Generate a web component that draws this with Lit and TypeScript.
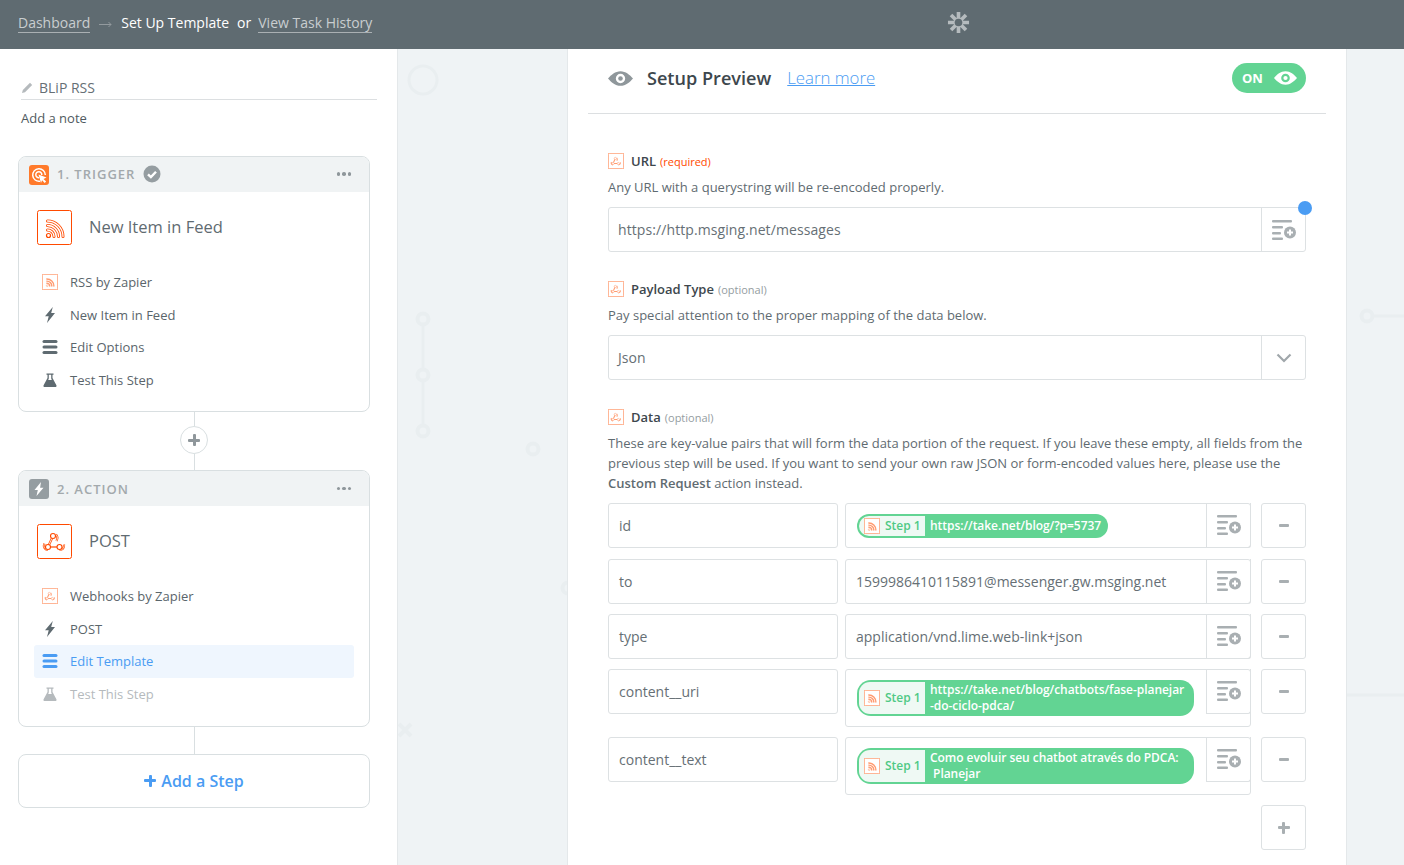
import { LitElement, css, html, svg } from 'lit';
import { customElement } from 'lit/decorators.js';

const RSS_ARCS = svg`
  <path d="M10.500 20a6.500 6.500 0 0 1 6.500 6.500"></path>
  <path d="M10.500 15.500a11 11 0 0 1 11 11"></path>
  <path d="M10.500 11a15.500 15.500 0 0 1 15.500 15.500"></path>
`;

const rssIcon = (cls: string) => html`
  <svg class=${cls} viewBox="0 0 35 35">
    <rect x="0.5" y="0.5" width="34" height="34" rx="2" fill="#fff" stroke="currentColor" vector-effect="non-scaling-stroke"></rect>
    <g fill="none" stroke="currentColor" stroke-width="3" stroke-linecap="round">${RSS_ARCS}</g>
    <g class="inner" fill="none" stroke="#fff" stroke-width="1.300" stroke-linecap="round">${RSS_ARCS}</g>
    <circle cx="11.500" cy="25.500" r="2" fill="#fff" stroke="currentColor" stroke-width="1.200"></circle>
  </svg>
`;

const HOOK_LINES = svg`
  <path d="M16 12l-5 11"></path>
  <path d="M11 23h11.500"></path>
  <path d="M19 10.500c2 2 1.500 4.500.5 6.500"></path>
  <path d="M7.500 19.500c-1.500 3 0 6 3.500 6.500"></path>
  <path d="M22.500 26c3 0 5-2 4.500-5.500"></path>
`;

const hookIcon = (cls: string) => html`
  <svg class=${cls} viewBox="0 0 35 35">
    <rect x="0.5" y="0.5" width="34" height="34" rx="2" fill="#fff" stroke="currentColor" vector-effect="non-scaling-stroke"></rect>
    <g fill="none" stroke="currentColor" stroke-width="2.200">${HOOK_LINES}</g>
    <g class="inner" fill="none" stroke="#fff" stroke-width="0.800">${HOOK_LINES}</g>
    <g fill="#fff" stroke="currentColor" stroke-width="1.100">
      <circle cx="16" cy="12" r="2.500"></circle>
      <circle cx="11" cy="23" r="2.500"></circle>
      <circle cx="22.500" cy="23" r="2.500"></circle>
    </g>
  </svg>
`;

const boltIcon = () => html`
  <svg class="glyph" viewBox="0 0 16 16"><path fill="currentColor" d="M10.800 0 3 9.300h3.700L5 16l8-10H9.200z"></path></svg>
`;

const barsIcon = () => html`
  <svg class="glyph" viewBox="0 0 16 16">
    <g fill="currentColor">
      <rect x="0.500" y="1" width="15" height="3" rx="1.500"></rect>
      <rect x="0.500" y="6.500" width="15" height="3" rx="1.500"></rect>
      <rect x="0.500" y="12" width="15" height="3" rx="1.500"></rect>
    </g>
  </svg>
`;

const flaskIcon = () => html`
  <svg class="glyph" viewBox="0 0 16 16">
    <path fill="currentColor" d="M4.500 1.500h7v1.300h-1v3.200l3.900 7.200c.5 1-.1 1.800-1 1.800H2.600c-.9 0-1.500-.8-1-1.800L5.500 6V2.800h-1z"></path>
    <path fill="#fff" d="M6.800 2.800h2.400v3.700l.6 1.500H6.200l.6-1.500z"></path>
  </svg>
`;

const pickerIcon = () => html`
  <svg class="picker-icon" viewBox="0 0 24 20">
    <g fill="#a9afb2">
      <rect x="0" y="0" width="20" height="2.400" rx="1"></rect>
      <rect x="0" y="6" width="11" height="2.400" rx="1"></rect>
      <rect x="0" y="12" width="9" height="2.400" rx="1"></rect>
      <rect x="0" y="17.500" width="11" height="2.400" rx="1"></rect>
      <circle cx="18" cy="12.500" r="6"></circle>
    </g>
    <path d="M18 9.500v6M15 12.500h6" stroke="#fff" stroke-width="2"></path>
  </svg>
`;

const eyeIcon = (cls: string) => html`
  <svg class=${cls} viewBox="0 0 24 16">
    <path fill="currentColor" fill-rule="evenodd" d="M12 1c5 0 9 3.500 12 7-3 3.500-7 7-12 7S3 11.500 0 8c3-3.500 7-7 12-7zm0 2.500a4.500 4.500 0 1 0 0 9 4.500 4.500 0 0 0 0-9z"></path>
    <circle cx="12" cy="8" r="2.200" fill="currentColor"></circle>
  </svg>
`;

const step = html`
  <span class="step">${rssIcon('app-sm')}<span>Step 1</span></span>
`;

type Row = { key: string; text?: string; chip?: string; multi?: boolean };

const ROWS: Row[] = [
  { key: 'id', chip: 'https://take.net/blog/?p=5737' },
  { key: 'to', text: '1599986410115891@messenger.gw.msging.net' },
  { key: 'type', text: 'application/vnd.lime.web-link+json' },
  { key: 'content__uri', chip: 'https://take.net/blog/chatbots/fase-planejar\n-do-ciclo-pdca/', multi: true },
  { key: 'content__text', chip: 'Como evoluir seu chatbot através do PDCA:\n Planejar', multi: true },
];

@customElement('app-root')
export class AppRoot extends LitElement {
  private renderCard(
    cls: string,
    badge: unknown,
    head: unknown,
    icon: unknown,
    title: string,
    items: { icon: unknown; label: string; cls?: string }[],
  ) {
    return html`
      <section class="card ${cls}">
        <header class="card-head">
          ${badge}
          <span class="card-step">${head}</span>
          <span class="dots"><i></i><i></i><i></i></span>
        </header>
        <div class="card-title">${icon}<span>${title}</span></div>
        <ul class="card-list">
          ${items.map(
            (it) => html`<li class=${it.cls ?? ''}><span class="list-icon">${it.icon}</span>${it.label}</li>`,
          )}
        </ul>
      </section>
    `;
  }

  private renderLabel(name: string, note: string, required = false) {
    return html`
      <div class="label">
        ${hookIcon('app-sm')}
        <b>${name}</b>
        <small class=${required ? 'req' : ''}>${note}</small>
      </div>
    `;
  }

  private renderRow(row: Row) {
    return html`
      <div class="row">
        <div class="box key">${row.key}</div>
        <div class="box value">
          <div class="value-body">
            ${row.chip
              ? html`<span class="chip ${row.multi ? 'multi' : ''}">${step}<span class="chip-text">${row.chip}</span></span>`
              : row.text}
          </div>
          <span class="picker">${pickerIcon()}</span>
        </div>
        <button class="box square"><span class="minus"></span></button>
      </div>
    `;
  }

  render() {
    return html`
      <nav class="top">
        <div class="crumbs">
          <a>Dashboard</a>
          <svg class="arrow" viewBox="0 0 13 7">
            <path d="M0 3.500h12M9.500 1l2.500 2.500L9.500 6" fill="none" stroke="#939a9e"></path>
          </svg>
          <span class="now">Set Up Template</span>
          <span class="now or">or</span>
          <a>View Task History</a>
        </div>
        <div class="logo">
          <svg viewBox="0 0 24 24" width="23" height="23">
            <g stroke="#b5bbbe" stroke-width="3.800">
              <path d="M12 1v22M1 12h22M4.200 4.200l15.600 15.600M19.800 4.200 4.200 19.800"></path>
            </g>
            <circle cx="12" cy="12" r="4" fill="#5f6b71"></circle>
          </svg>
        </div>
      </nav>
      <div class="page">
        <aside class="side">
          <div class="zap-name">
            <svg viewBox="0 0 12 12" width="12" height="12">
              <path fill="#b5babd" d="M9 .8 11.200 3 4 10.200 1 11l.8-3z"></path>
            </svg>
            <span>BLiP RSS</span>
          </div>
          <div class="note">Add a note</div>

          ${this.renderCard(
            'first',
            html`<svg class="badge" viewBox="0 0 20 20">
              <rect width="20" height="20" rx="3" fill="#ff7a2b"></rect>
              <g fill="none" stroke="#fff" stroke-width="1.500">
                <path d="M11 16.200A6.300 6.300 0 1 1 16.300 10"></path>
                <path d="M10 12.700A3 3 0 1 1 12.800 10"></path>
              </g>
              <path fill="#fff" d="M9.500 9.500l8 3-3 1.400 2.600 2.600-1.400 1.400-2.600-2.600-1.100 2.700z"></path>
            </svg>`,
            html`1. TRIGGER
              <svg class="check" viewBox="0 0 18 18">
                <circle cx="9" cy="9" r="8.500" fill="#959da1"></circle>
                <path d="M5 9.300l2.900 2.800L13 6.700" fill="none" stroke="#fff" stroke-width="2.400"></path>
              </svg>`,
            rssIcon('app-lg'),
            'New Item in Feed',
            [
              { icon: rssIcon('app-sm'), label: 'RSS by Zapier' },
              { icon: boltIcon(), label: 'New Item in Feed' },
              { icon: barsIcon(), label: 'Edit Options' },
              { icon: flaskIcon(), label: 'Test This Step' },
            ],
          )}
          <div class="link tall">
            <span class="wire"></span>
            <span class="add-circle"><span class="cross"></span></span>
            <span class="wire"></span>
          </div>
          ${this.renderCard(
            'second',
            html`<svg class="badge" viewBox="0 0 20 20">
              <rect width="20" height="20" rx="3" fill="#959da1"></rect>
              <path fill="#fff" d="M12 3 5.500 11h3.300L7.500 17 14.500 8.800h-3.400z"></path>
            </svg>`,
            '2. ACTION',
            hookIcon('app-lg'),
            'POST',
            [
              { icon: hookIcon('app-sm'), label: 'Webhooks by Zapier' },
              { icon: boltIcon(), label: 'POST' },
              { icon: barsIcon(), label: 'Edit Template', cls: 'active' },
              { icon: flaskIcon(), label: 'Test This Step', cls: 'muted' },
            ],
          )}
          <div class="link short"><span class="wire"></span></div>
          <button class="add-step">
            <span class="cross blue"></span>
            Add a Step
          </button>
        </aside>

        <main class="canvas">
          <svg class="decor" width="1006" height="816">
            ${svg`
              <g fill="#eff3f5" stroke="#e9eef0">
                <circle cx="25" cy="31" r="14" stroke-width="3"></circle>
                <path d="M25 270v112" stroke-width="3"></path>
                <circle cx="25" cy="270" r="5.500" stroke-width="4"></circle>
                <circle cx="25" cy="326" r="5.500" stroke-width="4"></circle>
                <circle cx="25" cy="382" r="5.500" stroke-width="4"></circle>
                <circle cx="135" cy="400" r="5.500" stroke-width="4"></circle>
                <circle cx="170" cy="539" r="5.500" stroke-width="4"></circle>
                <path d="M975 267h31M948 646h58" stroke-width="3"></path>
                <circle cx="969" cy="267" r="5.500" stroke-width="4"></circle>
                <path d="M1 675l12 12M13 675 1 687" stroke-width="4"></path>
              </g>
            `}
          </svg>
          <div class="panel">
            <header class="panel-head">
              ${eyeIcon('head-eye')}
              <h1>Setup Preview</h1>
              <a class="learn">Learn more</a>
              <span class="toggle">ON ${eyeIcon('toggle-eye')}</span>
            </header>
            <form class="form">
              ${this.renderLabel('URL', '(required)', true)}
              <p class="help">Any URL with a querystring will be re-encoded properly.</p>
              <div class="box input">
                <span class="input-text">https://http.msging.net/messages</span>
                <span class="addon">${pickerIcon()}</span>
                <span class="dot"></span>
              </div>

              <div class="gap"></div>
              ${this.renderLabel('Payload Type', '(optional)')}
              <p class="help">Pay special attention to the proper mapping of the data below.</p>
              <div class="box input">
                <span class="input-text">Json</span>
                <span class="addon">
                  <svg class="chevron" viewBox="0 0 16 10">
                    <path d="M1.500 1.500 8 8l6.500-6.500" fill="none" stroke="#a0a7ab" stroke-width="2.200"></path>
                  </svg>
                </span>
              </div>

              <div class="gap"></div>
              ${this.renderLabel('Data', '(optional)')}
              <p class="help">
                These are key-value pairs that will form the data portion of the request. If you leave these empty, all
                fields from the previous step will be used. If you want to send your own raw JSON or form-encoded values
                here, please use the <b>Custom Request</b> action instead.
              </p>
              <div class="rows">
                ${ROWS.map((r) => this.renderRow(r))}
                <div class="row">
                  <span></span><span></span>
                  <button class="box square"><span class="cross"></span></button>
                </div>
              </div>
            </form>
          </div>
        </main>
      </div>
    `;
  }

  static styles = css`
    :host {
      display: block;
      height: 865px;
      overflow: hidden;
      font-family: 'Open Sans', sans-serif;
      font-size: 14px;
      color: #5f6b71;
      background: #fff;
    }
    * {
      box-sizing: border-box;
    }

    /* top bar */
    .top {
      display: flex;
      height: 49px;
      background: #5f6b71;
    }
    .crumbs {
      display: flex;
      align-items: center;
      width: 568px;
      padding: 0 0 4px 18px;
      color: #fff;
    }
    .crumbs a {
      color: #c9ced0;
      line-height: 19px;
      border-bottom: 1px solid #aab0b3;
    }
    .arrow {
      width: 13px;
      height: 7px;
      margin: 4px 9px 0;
    }
    .now {
      margin-right: 8px;
    }
    .now.or {
      margin-right: 7px;
    }
    .logo {
      display: flex;
      justify-content: center;
      align-items: center;
      width: 778px;
      padding: 0 0 5px 2px;
    }

    .page {
      display: flex;
      height: 816px;
    }

    /* left column */
    .side {
      flex: none;
      width: 398px;
      padding: 31px 27px 0 18px;
      border-right: 1px solid #e4e8ea;
      background: #fff;
    }
    .zap-name {
      display: flex;
      align-items: flex-start;
      gap: 6px;
      height: 20px;
      margin: 0 -7px 0 3px;
      border-bottom: 1px solid #dcdfe1;
      color: #666f75;
      font-size: 14px;
      line-height: 16px;
    }
    .zap-name svg {
      margin-top: 2px;
    }
    .note {
      margin: 8px 0 28px 3px;
      line-height: 20px;
      font-size: 13px;
      font-weight: 500;
      color: #4f5a60;
    }
    .card {
      border: 1px solid #d9dfe1;
      border-radius: 8px;
      overflow: hidden;
      background: #fff;
    }
    .card-head {
      display: flex;
      align-items: center;
      height: 35px;
      padding: 0 18px 0 10px;
      background: #f0f3f4;
    }
    .badge {
      width: 20px;
      height: 20px;
      margin-right: 8px;
    }
    .card-step {
      display: flex;
      align-items: center;
      gap: 8px;
      flex: 1;
      font-size: 13px;
      font-weight: 600;
      letter-spacing: 1px;
      color: #a3a9ac;
    }
    .first .card-step,
    .first .dots {
      padding-bottom: 1px;
    }
    .check {
      width: 18px;
      height: 18px;
    }
    .dots {
      display: flex;
      gap: 2px;
    }
    .dots i {
      width: 3.500px;
      height: 3.500px;
      border-radius: 50%;
      background: #8f979b;
    }
    .card-title {
      display: flex;
      align-items: center;
      gap: 17px;
      margin: 18px 18px 21px;
      font-size: 16.500px;
      font-weight: 400;
      color: #5f6b71;
    }
    .card-title span {
      padding-bottom: 2px;
    }
    .app-lg {
      width: 35px;
      height: 35px;
      color: #ff4a00;
    }
    .app-sm {
      flex: none;
      width: 16px;
      height: 16px;
      color: #ff9b70;
    }
    .app-sm .inner {
      display: none;
    }
    .card-list {
      list-style: none;
      margin: 0 15px 15px;
      padding: 0;
    }
    .second .card-list {
      margin-top: 0.400px;
      padding-bottom: 0.600px;
    }
    .card-list li {
      display: flex;
      align-items: center;
      gap: 12px;
      height: 32.500px;
      padding-left: 8px;
      border-radius: 3px;
      font-size: 13px;
      font-weight: 500;
      color: #5a656b;
    }
    .list-icon {
      display: flex;
      width: 16px;
      height: 16px;
    }
    .glyph {
      width: 16px;
      height: 16px;
      color: #5f6b71;
    }
    li.active {
      background: #eff6fe;
      color: #4a9cf3;
    }
    li.active .glyph {
      color: #4a9cf3;
    }
    li.muted {
      color: #b5babd;
    }
    li.muted .glyph {
      color: #b5babd;
    }
    .link {
      display: flex;
      flex-direction: column;
      align-items: center;
    }
    .link.tall {
      height: 58px;
    }
    .link.tall .wire:first-child {
      flex: none;
      height: 14px;
    }
    .link.short {
      height: 27px;
    }
    .wire {
      flex: 1;
      width: 1px;
      background: #d9dfe1;
    }
    .add-circle {
      display: flex;
      align-items: center;
      justify-content: center;
      width: 28px;
      height: 28px;
      border: 1px solid #d9dfe1;
      border-radius: 50%;
      color: #8f979b;
    }
    .cross {
      position: relative;
      display: block;
      width: 12px;
      height: 12px;
      color: #8f979b;
    }
    .cross::before,
    .cross::after {
      content: '';
      position: absolute;
      background: currentColor;
      border-radius: 1px;
    }
    .cross::before {
      left: 0;
      right: 0;
      top: 4.500px;
      height: 3px;
    }
    .cross::after {
      top: 0;
      bottom: 0;
      left: 4.500px;
      width: 3px;
    }
    .add-step {
      display: flex;
      align-items: center;
      justify-content: center;
      gap: 5px;
      width: 100%;
      height: 54px;
      border: 1px solid #d9dfe1;
      border-radius: 8px;
      background: #fff;
      font: 600 16px 'Open Sans', sans-serif;
      color: #4a9cf3;
    }
    .cross.blue {
      color: #4a9cf3;
    }

    /* canvas and panel */
    .canvas {
      position: relative;
      flex: 1;
      padding-left: 170px;
      background: #eff3f5;
    }
    .decor {
      position: absolute;
      left: 0;
      top: 0;
    }
    .panel {
      position: relative;
      width: 778px;
      height: 100%;
      padding: 0 20px;
      background: #fff;
      box-shadow: 1px 0 0 #e4e8ea, -1px 0 0 #e4e8ea;
    }
    .panel-head {
      display: flex;
      align-items: center;
      height: 65px;
      padding: 14px 20px 20px;
      border-bottom: 1px solid #dcdfe1;
    }
    .head-eye {
      width: 25px;
      height: 17px;
      margin-right: 14px;
      color: #8f979b;
    }
    h1 {
      margin: 0 16px 0 0;
      font-size: 18.100px;
      font-weight: 600;
      color: #3d474d;
    }
    .learn {
      flex: 1;
      padding-bottom: 2px;
      font-size: 16.800px;
      font-weight: 300;
      color: #4a9cf3;
      text-decoration: underline;
    }
    .toggle {
      display: flex;
      align-items: center;
      justify-content: space-between;
      width: 74px;
      height: 30px;
      padding: 0 9px 0 10px;
      border-radius: 15px;
      background: #62d493;
      color: #fff;
      font-size: 13px;
      font-weight: 700;
    }
    .toggle-eye {
      width: 23px;
      height: 16px;
    }
    .form {
      padding: 39px 20px 0;
    }
    .label {
      display: flex;
      align-items: center;
      height: 16px;
      font-size: 13px;
      color: #3d474d;
    }
    .label b {
      margin: 0 4px 0 7px;
      font-weight: 600;
    }
    .label small {
      font-size: 11px;
      font-weight: 400;
      color: #959da1;
    }
    .label small.req {
      color: #ff4a00;
    }
    .help {
      margin: 8px 0 10px;
      line-height: 20px;
      font-size: 13px;
      color: #5f6b71;
    }
    .help b {
      font-weight: 600;
    }
    .gap {
      height: 29px;
    }
    .box {
      border: 1px solid #dde1e3;
      border-radius: 3px;
      background: #fff;
    }
    .input {
      position: relative;
      display: flex;
      align-items: center;
      height: 45px;
      color: #666f75;
    }
    .input-text {
      flex: 1;
      padding-left: 9px;
      letter-spacing: 0.090px;
    }
    .addon {
      display: flex;
      align-items: center;
      justify-content: center;
      width: 44px;
      height: 100%;
      border-left: 1px solid #dde1e3;
    }
    .picker-icon {
      width: 24px;
      height: 20px;
    }
    .chevron {
      width: 16px;
      height: 10px;
    }
    .dot {
      position: absolute;
      right: -7px;
      top: -7px;
      width: 14px;
      height: 14px;
      border-radius: 50%;
      background: #4a9cf3;
    }
    .rows {
      display: flex;
      flex-direction: column;
      gap: 10px;
    }
    .row {
      display: grid;
      grid-template-columns: 230px 406px 45px;
      column-gap: 7px;
      align-items: start;
    }
    .row:first-child {
      margin-bottom: 1px;
    }
    .row > .square {
      margin-left: 3px;
    }
    .key {
      display: flex;
      align-items: center;
      height: 45px;
      padding-left: 10px;
      color: #666f75;
    }
    .value {
      display: flex;
      align-items: flex-start;
      min-height: 45px;
      color: #666f75;
    }
    .value-body {
      display: flex;
      align-items: flex-start;
      flex: 1;
      min-height: 43px;
      padding: 10px 0 9px 10px;
      line-height: 23px;
    }
    .picker {
      display: flex;
      align-items: center;
      justify-content: center;
      flex: none;
      width: 45px;
      height: 45px;
      margin: -1px -1px -1px 0;
      border: 1px solid #dde1e3;
      border-top: 0;
      border-radius: 0 0 3px 0;
    }
    .square {
      display: flex;
      align-items: center;
      justify-content: center;
      width: 45px;
      height: 45px;
      padding: 0;
    }
    .minus {
      width: 10px;
      height: 3px;
      border-radius: 1px;
      background: #a9afb2;
    }
    .square .cross {
      color: #a9afb2;
    }
    .chip {
      display: inline-flex;
      align-items: stretch;
      margin-left: 1px;
      min-height: 24px;
      padding: 2px 0 2px 2px;
      border-radius: 12px;
      background: #62d493;
      line-height: 16px;
    }
    .chip.multi {
      width: 337px;
      min-height: 36px;
      margin-bottom: 1px;
      border-radius: 14px;
    }
    .step {
      display: flex;
      flex: none;
      align-items: center;
      gap: 5px;
      width: 66px;
      padding-left: 5px;
      border-radius: 11px 0 0 11px;
      background: #eff9f4;
      color: #4fc985;
      font-size: 12px;
      font-weight: 600;
    }
    .chip-text {
      align-self: center;
      padding: 0 7px 0 5px;
      line-height: 16px;
      white-space: pre;
      letter-spacing: -0.050px;
      color: #fff;
      font-size: 12px;
      font-weight: 600;
    }
  `;
}

declare global {
  interface HTMLElementTagNameMap {
    'app-root': AppRoot;
  }
}
